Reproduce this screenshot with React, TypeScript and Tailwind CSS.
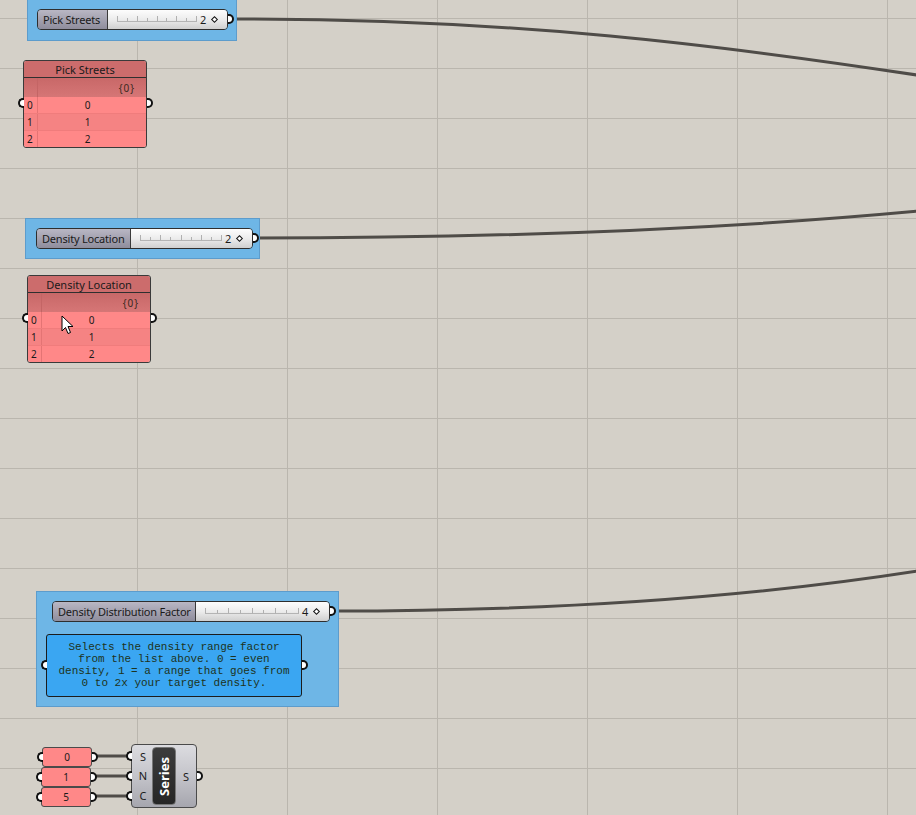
import React from "react";

const FONT = "font-['Noto_Sans','Open_Sans',sans-serif]";

function PortR({ className }: { className: string }) {
  return (
    <div
      className={`absolute w-[6px] h-[10px] rounded-r-full border-2 border-l-0 border-[#111] bg-white ${className}`}
    />
  );
}
function PortL({ className }: { className: string }) {
  return (
    <div
      className={`absolute w-[6px] h-[10px] rounded-l-full border-2 border-r-0 border-[#111] bg-white ${className}`}
    />
  );
}

function Track({ width }: { width: number }) {
  const ticks: number[] = [];
  const n = 8;
  for (let i = 0; i <= n; i++) ticks.push(Math.round((i * (width - 1)) / n) + 0.5);
  return (
    <svg width={width} height={18} className="shrink-0">
      <line x1={0} y1={10.5} x2={width} y2={10.5} stroke="#b4b4b4" strokeWidth={1} />
      {ticks.map((x, i) => (
        <line key={i} x1={x} y1={i % 2 === 0 ? 5 : 7} x2={x} y2={10.5} stroke="#b0b0b0" strokeWidth={1} />
      ))}
    </svg>
  );
}

function Diamond() {
  return <div className="w-[5px] h-[5px] rotate-45 border-[1.5px] border-[#111] bg-white shrink-0" />;
}

function Slider({
  className,
  labelClass,
  label,
  value,
  track,
}: {
  className: string;
  labelClass: string;
  label: string;
  value: string;
  track: number;
}) {
  return (
    <div className={`absolute h-[21px] ${className}`}>
      <div className="flex h-full w-full border border-[#2e2e2e] rounded-[4px] overflow-hidden">
        <div
          className={`${labelClass} h-full flex items-center pl-[5px] text-[11px] leading-none text-[#1a1a1a] bg-linear-to-b from-[#b9b7c4] to-[#8f8d9c] border-r border-[#3a3a3a] whitespace-nowrap tracking-[-0.2px]`}
        >
          {label}
        </div>
        <div className="flex-1 h-full flex items-center pl-[9px] bg-linear-to-b from-[#fdfdfd] via-[#ececec] to-[#cfcfcf]">
          <Track width={track} />
          <span className="ml-[3px] text-[11px] leading-none text-[#1a1a1a]">{value}</span>
          <div className="ml-[6px]">
            <Diamond />
          </div>
        </div>
      </div>
      <PortR className="right-[-6px] top-[5px]" />
    </div>
  );
}

function ListPanel({ className, title }: { className: string; title: string }) {
  const rows = ["0", "1", "2"];
  return (
    <div className={`absolute w-[124px] h-[88px] ${className}`}>
      <div className="w-full h-full flex flex-col border border-[#3a3a3a] rounded-[3px] overflow-hidden">
        <div className="h-[17px] shrink-0 bg-[#cc6c6c] border-b border-[#2f2f2f] flex items-center justify-center text-[11px] leading-none text-[#1a1a1a]">
          {title}
        </div>
        <div className="h-[19px] shrink-0 flex bg-linear-to-b from-[#c86868] to-[#d67676]">
          <div className="w-[14px] border-r border-[#c46565]" />
          <div className="flex-1 flex items-center justify-end pr-[11px] text-[10px] leading-none text-[#3b2a22] tracking-[1px]">
            {"{0}"}
          </div>
        </div>
        {rows.map((r, i) => (
          <div
            key={r}
            className={`flex-1 flex ${i === 1 ? "bg-[#f58383]" : "bg-[#ff8888]"} ${i < 2 ? "border-b border-[#f07c7c]" : ""}`}
          >
            <div className="w-[14px] border-r border-[#e47474] flex items-center pl-[3px] text-[10px] leading-none text-[#1a1a1a]">
              {r}
            </div>
            <div className="flex-1 flex items-center justify-center pr-[9px] text-[10px] leading-none text-[#1a1a1a]">
              {r}
            </div>
          </div>
        ))}
      </div>
      <PortL className="left-[-5px] top-[38px]" />
      <PortR className="right-[-6px] top-[38px]" />
    </div>
  );
}

function SmallPanel({ className, v }: { className: string; v: string }) {
  return (
    <div className={`absolute w-[50px] h-[20px] ${className}`}>
      <div className="w-full h-full bg-[#ff8888] border border-[#4a4a4a] rounded-[3px] flex items-center justify-center text-[10px] leading-none text-[#1a1a1a]">
        {v}
      </div>
      <PortL className="left-[-5px] top-[5px]" />
      <PortR className="right-[-6px] top-[5px]" />
    </div>
  );
}

export default function App() {
  const vLines = [-13, 137, 287, 437, 587, 737, 887];
  const hLines: number[] = [];
  for (let y = 18; y < 815; y += 50) hLines.push(y);
  return (
    <div className={`relative w-[916px] h-[815px] overflow-hidden bg-[#d4d0c8] ${FONT}`}>
      <svg className="absolute inset-0" width={916} height={815}>
        {vLines.map((x) => (
          <line key={"v" + x} x1={x + 0.5} y1={0} x2={x + 0.5} y2={815} stroke="#bab6ae" strokeWidth={1} />
        ))}
        {hLines.map((y) => (
          <line key={"h" + y} x1={0} y1={y + 0.5} x2={916} y2={y + 0.5} stroke="#bab6ae" strokeWidth={1} />
        ))}
        <g stroke="#4f4c48" strokeWidth={3} fill="none">
          <path d="M232,19 C520,19 720,45 930,77" />
          <path d="M254,238 C450,238 700,232 930,210" />
          <path d="M332,611 C550,611 750,598 930,569" />
          <path d="M93,756 L131,756" />
          <path d="M92,776 L131,776" />
          <path d="M92,796 L131,796" />
        </g>
      </svg>

      {/* Group 1 */}
      <div className="absolute left-[27px] top-[-1px] w-[210px] h-[42px] bg-[#6eb6e6] border border-[#5d9ccc]" />
      <Slider className="left-[37px] top-[9px] w-[191px]" labelClass="w-[70px]" label="Pick Streets" value="2" track={80} />

      <ListPanel className="left-[23px] top-[60px]" title="Pick Streets" />

      {/* Group 2 */}
      <div className="absolute left-[25px] top-[218px] w-[235px] h-[41px] bg-[#6eb6e6] border border-[#5d9ccc]" />
      <Slider className="left-[36px] top-[228px] w-[217px]" labelClass="w-[94px]" label="Density Location" value="2" track={82} />

      <ListPanel className="left-[27px] top-[275px]" title="Density Location" />

      {/* Group 3 */}
      <div className="absolute left-[36px] top-[591px] w-[303px] h-[116px] bg-[#6eb6e6] border border-[#5d9ccc]" />
      <Slider
        className="left-[52px] top-[601px] w-[278px]"
        labelClass="w-[143px]"
        label="Density Distribution Factor"
        value="4"
        track={94}
      />
      <div className="absolute left-[46px] top-[634px] w-[256px] h-[63px]">
        <div className="w-full h-full pb-[2px] bg-[#3aa6f2] border border-[#1c1c1c] rounded-[3px] flex flex-col items-center justify-center font-['Liberation_Mono',monospace] text-[11px] leading-[12px] text-[#1e3320] whitespace-pre">
          <div>Selects the density range factor</div>
          <div>from the list above. 0 = even</div>
          <div>density, 1 = a range that goes from</div>
          <div>0 to 2x your target density.</div>
        </div>
        <PortL className="left-[-5px] top-[26px]" />
        <PortR className="right-[-6px] top-[26px]" />
      </div>

      {/* Number panels */}
      <SmallPanel className="left-[42px] top-[747px]" v="0" />
      <SmallPanel className="left-[41px] top-[767px]" v="1" />
      <SmallPanel className="left-[41px] top-[787px]" v="5" />

      {/* Series */}
      <div className="absolute left-[131px] top-[744px] w-[66px] h-[64px]">
        <div className="w-full h-full flex items-stretch border border-[#4a4a4a] rounded-[4px] bg-linear-to-b from-[#dcdce0] via-[#c4c4ca] to-[#a6a6ae] py-[2px]">
          <div className="w-[20px] flex flex-col justify-around items-center pl-[2px] text-[11px] leading-none text-[#1a1a1a]">
            <span>S</span>
            <span>N</span>
            <span>C</span>
          </div>
          <div className="w-[24px] rounded-[4px] bg-linear-to-b from-[#3c3c3c] to-[#262626] border border-[#777] flex items-center justify-center">
            <span className="-rotate-90 text-white font-bold text-[13px] leading-none">Series</span>
          </div>
          <div className="flex-1 flex items-center justify-center text-[11px] leading-none text-[#1a1a1a]">S</div>
        </div>
        <PortL className="left-[-5px] top-[7px]" />
        <PortL className="left-[-5px] top-[27px]" />
        <PortL className="left-[-5px] top-[47px]" />
        <PortR className="right-[-6px] top-[27px]" />
      </div>

      {/* Cursor */}
      <svg className="absolute left-[61px] top-[315px]" width={14} height={22}>
        <path
          d="M1,1 L1,16 L4.5,12.5 L7,18.5 L9.5,17.5 L7,11.5 L12,11.5 Z"
          fill="white"
          stroke="black"
          strokeWidth={1}
          strokeLinejoin="round"
        />
      </svg>
    </div>
  );
}
